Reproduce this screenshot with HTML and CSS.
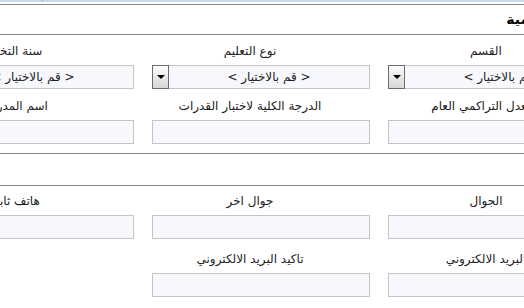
FILE: index.html
```html
<!DOCTYPE html>
<html lang="ar">
  <head>
    <meta charset="UTF-8" />
    <meta name="viewport" content="width=device-width, initial-scale=1.0" />
    <title>التسجيل</title>
    <link rel="stylesheet" href="styles.css">
  </head>
  <body>
    <div class="tabbar"><span class="tab-edge"></span></div>
    <form class="register" dir="rtl">
      <div class="section-title">
        <h3>البيانات الأكاديمية</h3>
      </div>
      <div class="fields fields-study">
        <div class="field">
          <label for="department">القسم</label>
          <div class="select-box">
            <select id="department">
              <option>&lt; قم بالاختيار &gt;</option>
            </select>
            <span class="arrow"></span>
          </div>
        </div>
        <div class="field">
          <label for="eduType">نوع التعليم</label>
          <div class="select-box">
            <select id="eduType">
              <option>&lt; قم بالاختيار &gt;</option>
            </select>
            <span class="arrow"></span>
          </div>
        </div>
        <div class="field">
          <label for="gradYear">سنة التخرج</label>
          <div class="select-box">
            <select id="gradYear">
              <option>&lt; قم بالاختيار &gt;</option>
            </select>
            <span class="arrow"></span>
          </div>
        </div>
        <div class="field">
          <label for="gpa">المعدل التراكمي العام</label>
          <input type="text" id="gpa" />
        </div>
        <div class="field">
          <label for="aptitude">الدرجة الكلية لاختبار القدرات</label>
          <input type="text" id="aptitude" />
        </div>
        <div class="field">
          <label for="school">اسم المدرسة</label>
          <input type="text" id="school" />
        </div>
      </div>

      <div class="section-title section-contact">
        <h3>بيانات الاتصال</h3>
      </div>
      <div class="fields fields-contact">
        <div class="field">
          <label for="mobile">الجوال</label>
          <input type="text" id="mobile" />
        </div>
        <div class="field">
          <label for="mobile2">جوال اخر</label>
          <input type="text" id="mobile2" />
        </div>
        <div class="field">
          <label for="phone">هاتف ثابت</label>
          <input type="text" id="phone" />
        </div>
        <div class="field">
          <label for="email">البريد الالكتروني</label>
          <input type="text" id="email" />
        </div>
        <div class="field">
          <label for="email2">تاكيد البريد الالكتروني</label>
          <input type="text" id="email2" />
        </div>
      </div>
    </form>
  </body>
</html>
```

FILE: styles.css
```css
html,
body {
  margin: 0;
  overflow: hidden;
  background-color: white;
}

body {
  font-family: Tahoma, "DejaVu Sans", sans-serif;
  font-size: 12px;
  color: #222;
}

.tabbar {
  height: 2px;
  margin-bottom: 2px;
  background-color: #cbd7ea;
}

.tab-edge {
  display: block;
  width: 1px;
  height: 2px;
  margin-left: 42px;
  background-color: #a9b8cf;
}

.register {
  width: 800px;
  margin-left: -94px;
}

.section-title {
  height: 29px;
  border-top: 1px solid #858585;
  border-bottom: 1px solid #858585;
}

.section-contact {
  height: 31px;
}

.section-title h3 {
  margin: 0;
  padding-right: 79px;
  font-size: 14px;
  line-height: 29px;
  font-weight: bold;
  color: #000;
}

.fields {
  display: grid;
  grid-template-columns: repeat(3, 218px);
  justify-content: end;
  column-gap: 18px;
  padding-left: 10px;
}

.fields-study {
  row-gap: 9px;
  padding-top: 8px;
  padding-bottom: 9px;
}

.fields-contact {
  row-gap: 12px;
  padding-top: 7px;
}

.field label {
  display: block;
  height: 16px;
  line-height: 16px;
  margin-bottom: 6px;
  padding-right: 22px;
  text-align: center;
  white-space: nowrap;
}

.field input[type="text"] {
  display: block;
  width: 100%;
  height: 24px;
  margin: 0;
  border: 1px solid #c4c4c4;
  background-color: #f7f8fd;
  box-sizing: border-box;
}

.select-box {
  display: flex;
  height: 24px;
}

.select-box select {
  flex: 1;
  min-width: 0;
  height: 24px;
  margin: 0;
  padding: 0;
  border: 1px solid #c4c4c4;
  border-left: none;
  background-color: #f7f8fd;
  font-family: inherit;
  font-size: 12px;
  color: #222;
  text-align-last: center;
  appearance: none;
  -webkit-appearance: none;
}

.arrow {
  display: flex;
  justify-content: center;
  align-items: center;
  width: 17px;
  height: 24px;
  border: 1px solid #6c6c6c;
  background: linear-gradient(#fdfdfd, #d6d6d6);
  box-sizing: border-box;
}

.arrow::before {
  content: "";
  border-left: 4px solid transparent;
  border-right: 4px solid transparent;
  border-top: 4px solid #000;
}
```
